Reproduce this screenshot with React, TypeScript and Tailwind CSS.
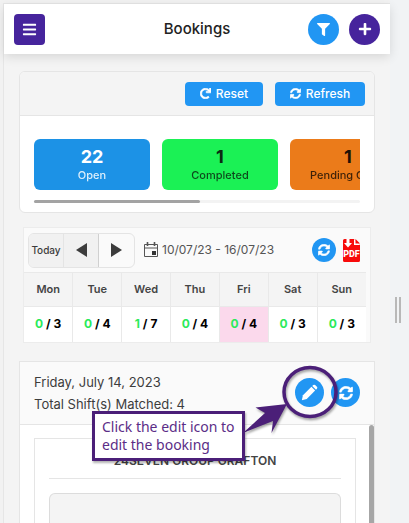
import type { ReactNode } from 'react';
import { FaBars, FaFilter, FaPlus, FaRedo, FaSyncAlt } from 'react-icons/fa';

interface StatusTileProps {
  count: number;
  label: string;
  className: string;
}

const statuses: StatusTileProps[] = [
  { count: 22, label: 'Open', className: 'bg-[#1c92e6] text-white' },
  { count: 1, label: 'Completed', className: 'bg-[#1bf155] text-[#0b2a12]' },
  { count: 1, label: 'Pending Close', className: 'bg-[#eb7b1a] text-[#1f1206]' },
];

const days = [
  { name: 'Mon', filled: 0, total: 3 },
  { name: 'Tue', filled: 0, total: 4 },
  { name: 'Wed', filled: 1, total: 7 },
  { name: 'Thu', filled: 0, total: 4 },
  { name: 'Fri', filled: 0, total: 4, active: true },
  { name: 'Sat', filled: 0, total: 3 },
  { name: 'Sun', filled: 0, total: 3 },
];

function StatusTile({ count, label, className }: StatusTileProps) {
  return (
    <button className={`flex h-[51px] w-[116px] shrink-0 flex-col items-center justify-center rounded-md ${className}`}>
      <span className="text-lg leading-5 font-bold">{count}</span>
      <span className="text-[11px] leading-4 font-medium whitespace-nowrap opacity-85">{label}</span>
    </button>
  );
}

function RoundButton({ label, className, children }: { label: string; className: string; children: ReactNode }) {
  return (
    <button aria-label={label} className={`flex shrink-0 items-center justify-center rounded-full text-white ${className}`}>
      {children}
    </button>
  );
}

function CalendarIcon() {
  return (
    <svg width="14" height="16" viewBox="0 0 14 16" fill="none" stroke="#555">
      <path d="M.5 2.500h13v12H.5zM.5 6h13" />
      <path d="M3.500 0v4M10.500 0v4" strokeWidth="1.600" />
      <path d="M8 9h4v4H8z" fill="#333" stroke="none" />
    </svg>
  );
}

function PencilIcon() {
  return (
    <svg width="17" height="17" viewBox="0 0 16 16" fill="currentColor">
      <path d="M.8 15.200l1-4.600L9.800 2.700l3.500 3.500-7.900 8z" />
      <path d="M10.600 1.900l.9-.9q.9-.8 1.800 0l1.700 1.700q.8.900 0 1.800l-.9.900z" />
    </svg>
  );
}

function PdfIcon() {
  return (
    <svg width="17" height="23" viewBox="0 0 17 23">
      <path d="M1.500 0H11l6 6v15.500a1.500 1.500 0 0 1-1.500 1.500h-14A1.500 1.500 0 0 1 0 21.500v-20A1.500 1.500 0 0 1 1.500 0z" fill="#f80b0b" />
      <path d="M11 0v6h6z" fill="#fff" />
      <path d="M12.500 0v4.500H17z" fill="#f80b0b" />
      <path d="M3.500 0h3v4H9L5 8.500 1 4h2.500z" fill="#fff" />
      <text x="8.500" y="17.500" textAnchor="middle" fill="#fff" fontSize="9" fontWeight="800" fontFamily="Roboto, sans-serif">
        PDF
      </text>
    </svg>
  );
}

function Header() {
  return (
    <header className="relative flex h-[50px] shrink-0 items-center justify-between bg-white px-[10px] shadow-[0_3px_10px_rgba(0,0,0,0.12)]">
      <button aria-label="Menu" className="flex size-[31px] items-center justify-center rounded bg-[#46249c] text-white">
        <FaBars size={15} />
      </button>
      <h1 className="absolute inset-x-16 text-center text-[15px] font-medium text-[#222]">Bookings</h1>
      <div className="flex gap-[10px]">
        <RoundButton label="Filter" className="size-[31px] bg-[#2196f3]">
          <FaFilter size={13} />
        </RoundButton>
        <RoundButton label="Add booking" className="size-[31px] bg-[#46249c]">
          <FaPlus size={14} />
        </RoundButton>
      </div>
    </header>
  );
}

function StatusCard() {
  return (
    <section className="mx-[15px] mt-[17px] overflow-hidden rounded-md border border-[#e5e5e5] bg-white">
      <div className="flex h-[44px] items-center justify-end gap-3 border-b border-[#e5e5e5] bg-[#f4f4f4] px-[9px]">
        <button className="flex h-6 w-[78px] items-center justify-center gap-[5px] rounded bg-[#2196f3] text-xs font-medium text-white">
          <FaRedo size={11} stroke="currentColor" strokeWidth={30} />
          Reset
        </button>
        <button className="flex h-6 w-[90px] items-center justify-center gap-[5px] rounded bg-[#2196f3] text-xs font-medium text-white">
          <FaSyncAlt size={11} stroke="currentColor" strokeWidth={20} />
          Refresh
        </button>
      </div>
      <div className="px-[14px] pt-[23px] pb-[9px]">
        <div className="flex gap-3 overflow-x-auto [scrollbar-width:none]">
          {statuses.map((status) => (
            <StatusTile key={status.label} {...status} />
          ))}
        </div>
        <div className="mt-[10px] h-[3px] rounded-full bg-[#f3f3f3]">
          <div className="h-full w-[51%] rounded-full bg-[#a3a3a3]" />
        </div>
      </div>
    </section>
  );
}

function WeekCard() {
  return (
    <section className="mx-[19px] mt-[14px] border border-[#ececec] bg-[#fafafa]">
      <div className="flex h-[44px] items-center pr-[10px] pl-1">
        <div className="flex h-[35px] overflow-hidden rounded-md border border-[#e4e4e4] text-[#3c3c3c]">
          <button className="w-[35px] border-r border-[#e4e4e4] bg-[#f1f1f1] text-[10px] font-medium">Today</button>
          <button aria-label="Previous week" className="flex w-[35px] items-center justify-center border-r border-[#d0d0d0] bg-[#f1f1f1]">
            <svg width="11" height="14" viewBox="0 0 11 14" fill="currentColor">
              <path d="M11 0v14L0 7z" />
            </svg>
          </button>
          <button aria-label="Next week" className="flex w-[35px] items-center justify-center">
            <svg width="11" height="14" viewBox="0 0 11 14" fill="currentColor">
              <path d="M0 0v14l11-7z" />
            </svg>
          </button>
        </div>
        <div className="ml-[9px] flex items-center gap-1 text-xs whitespace-nowrap text-[#555]">
          <CalendarIcon />
          10/07/23 - 16/07/23
        </div>
        <div className="ml-auto flex items-center gap-[7px]">
          <RoundButton label="Reload week" className="size-6 bg-[#2196f3]">
            <FaSyncAlt size={12} stroke="currentColor" strokeWidth={20} />
          </RoundButton>
          <button aria-label="Download PDF">
            <PdfIcon />
          </button>
        </div>
      </div>
      <div className="pr-1">
        <table className="w-full table-fixed text-center">
          <thead>
            <tr className="h-[34px] border-y border-[#e9e9e9] bg-[#f4f4f4] text-[11px] text-[#444]">
              {days.map((day) => (
                <th key={day.name} className="border-r border-[#e9e9e9] font-semibold last:border-r-0">
                  {day.name}
                </th>
              ))}
            </tr>
          </thead>
          <tbody>
            <tr className="h-[35px] text-xs font-bold text-black">
              {days.map((day) => (
                <td
                  key={day.name}
                  className={`border-r border-[#e9e9e9] last:border-r-0 ${day.active ? 'bg-[#fbd9ec]' : 'bg-white'}`}
                >
                  <span className="text-[#2bea5b]">{day.filled}</span> / {day.total}
                </td>
              ))}
            </tr>
          </tbody>
        </table>
      </div>
    </section>
  );
}

function EditHint() {
  return (
    <>
      <svg className="absolute top-0 right-[34px]" width="100" height="76" viewBox="0 0 100 76">
        <g style={{ filter: 'drop-shadow(1px 2px 1px rgba(0,0,0,0.35))' }}>
          <ellipse cx="70" cy="30" rx="26" ry="24.500" fill="none" stroke="#4b1f78" strokeWidth="3.500" />
          <path d="M47 42 15.500 45.500l9.500 5.500L3 71l30-12-1.500 12z" fill="#4b1f78" />
        </g>
      </svg>
      <div className="absolute top-[49px] right-[129px] w-[153px] border-[3px] border-[#4b1f78] bg-white px-[7px] py-1 font-['Noto_Sans',sans-serif] text-sm leading-[18px] whitespace-nowrap text-[#5b2d87] shadow-[1px_2px_2px_rgba(0,0,0,0.3)]">
        Click the edit icon to
        <br />
        edit the booking
      </div>
    </>
  );
}

function DayCard() {
  return (
    <section className="relative mx-[15px] mt-[18px] flex flex-1 flex-col border border-b-0 border-[#e5e5e5] bg-white">
      <div className="flex h-[63px] shrink-0 items-center justify-between border-b border-[#e5e5e5] bg-[#fafafa] px-[14px]">
        <div className="text-[13px] leading-[22px] text-[#3d3d3d]">
          <p>Friday, July 14, 2023</p>
          <p>Total Shift(s) Matched: 4</p>
        </div>
        <div className="flex gap-[7px]">
          <RoundButton label="Edit booking" className="size-[29px] bg-[#2196f3]">
            <PencilIcon />
          </RoundButton>
          <RoundButton label="Reload day" className="size-[29px] bg-[#2196f3]">
            <FaSyncAlt size={14} stroke="currentColor" strokeWidth={16} />
          </RoundButton>
        </div>
      </div>
      <div className="flex flex-1">
        <div className="mt-[13px] ml-[14px] flex flex-1 flex-col border border-b-0 border-[#e5e5e5] px-[14px]">
          <h2 className="border-b border-[#e5e5e5] pt-[13px] pb-2 text-center text-xs leading-[18px] font-semibold text-[#444]">
            24SEVEN GROUP GRAFTON
          </h2>
          <div className="mt-[14px] flex-1 rounded-t-md border border-b-0 border-[#dcdcdc] bg-[#f4f4f4]" />
        </div>
        <div className="ml-[13px] w-[5px] rounded-t-full bg-[#a6a6a6]" />
      </div>
      <EditHint />
    </section>
  );
}

export default function App() {
  return (
    <div className="flex h-screen overflow-hidden bg-[#f2f2f2] pl-[3px] font-['Inter',sans-serif]">
      <main className="mt-[3px] flex min-w-0 flex-1 flex-col border-t border-l border-[#e6e6e6] bg-[#f4f4f4]">
        <Header />
        <StatusCard />
        <WeekCard />
        <DayCard />
      </main>
      <aside className="flex w-[19px] shrink-0 items-center gap-[2px] bg-[#f1f3f5] pt-24 pl-[5px]">
        <div className="h-[26px] w-[2px] bg-[#b8b8b8]" />
        <div className="h-[26px] w-[2px] bg-[#b8b8b8]" />
      </aside>
    </div>
  );
}
